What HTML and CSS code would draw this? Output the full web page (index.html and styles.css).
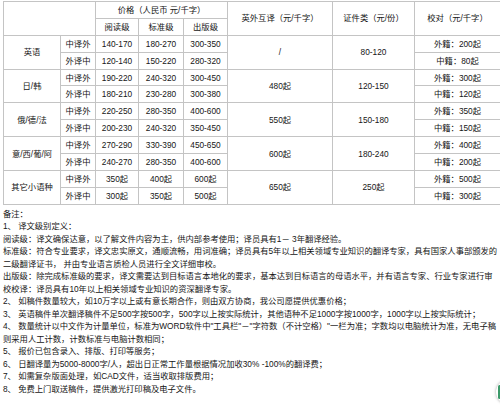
FILE: index.html
```html
<!DOCTYPE html>
<html lang="zh-CN">
<head>
<meta charset="utf-8">
<title>翻译报价</title>
<link rel="stylesheet" href="styles.css">
</head>
<body>
<div class="page">
  <table class="price">
    <colgroup>
      <col class="c1"><col class="c2"><col class="c3"><col class="c4"><col class="c5"><col class="c6"><col class="c7"><col class="c8">
    </colgroup>
    <tr>
      <td colspan="2" rowspan="2"></td>
      <td colspan="3">价格（人民币 元/千字）</td>
      <td rowspan="2">英外互译（元/千字）</td>
      <td rowspan="2">证件类（元/份）</td>
      <td rowspan="2">校对（元/千字）</td>
    </tr>
    <tr><td>阅读级</td><td>标准级</td><td>出版级</td></tr>

    <tr><td rowspan="2">英语</td><td>中译外</td><td>140-170</td><td>180-270</td><td>300-350</td><td rowspan="2">/</td><td rowspan="2">80-120</td><td>外籍：200起</td></tr>
    <tr><td>外译中</td><td>120-140</td><td>150-220</td><td>280-320</td><td>中籍：80起</td></tr>

    <tr><td rowspan="2">日/韩</td><td>中译外</td><td>190-220</td><td>240-320</td><td>300-450</td><td rowspan="2">480起</td><td rowspan="2">120-150</td><td>外籍：300起</td></tr>
    <tr><td>外译中</td><td>180-210</td><td>230-280</td><td>300-380</td><td>中籍：120起</td></tr>

    <tr><td rowspan="2">俄/德/法</td><td>中译外</td><td>220-250</td><td>280-350</td><td>400-600</td><td rowspan="2">550起</td><td rowspan="2">150-180</td><td>外籍：350起</td></tr>
    <tr><td>外译中</td><td>200-230</td><td>240-320</td><td>350-450</td><td>中籍：150起</td></tr>

    <tr><td rowspan="2">意/西/葡/阿</td><td>中译外</td><td>270-290</td><td>330-390</td><td>450-650</td><td rowspan="2">600起</td><td rowspan="2">180-240</td><td>外籍：400起</td></tr>
    <tr><td>外译中</td><td>240-270</td><td>280-350</td><td>400-600</td><td>中籍：200起</td></tr>

    <tr><td rowspan="2">其它小语种</td><td>中译外</td><td>350起</td><td>400起</td><td>600起</td><td rowspan="2">650起</td><td rowspan="2">250起</td><td>外籍：500起</td></tr>
    <tr><td>外译中</td><td>300起</td><td>350起</td><td>500起</td><td>中籍：300起</td></tr>
  </table>

  <div class="notes">
    <div class="line">备注：</div>
    <div class="line">1、 译文级别定义：</div>
    <div class="line">阅读级：译文确保达意，以了解文件内容为主，供内部参考使用；译员具有1－ 3年翻译经验。</div>
    <div class="line">标准级：符合专业要求，译文忠实原文，通顺流畅，用词准确；译员具有5年以上相关领域专业知识的翻译专家，具有国家人事部颁发的</div>
    <div class="line">二级翻译证书， 并由专业语言质检人员进行全文详细审校。</div>
    <div class="line">出版级：除完成标准级的要求，译文需要达到目标语言本地化的要求，基本达到目标语言的母语水平，并有语言专家、行业专家进行审</div>
    <div class="line">校校译：译员具有10年以上相关领域专业知识的资深翻译专家。</div>
    <div class="line">2、 如稿件数量较大，如10万字以上或有意长期合作，则由双方协商，我公司愿提供优惠价格；</div>
    <div class="line">3、 英语稿件单次翻译稿件不足500字按500字，500字以上按实际统计，其他语种不足1000字按1000字，1000字以上按实际统计；</div>
    <div class="line">4、 数量统计以中文作为计量单位，标准为WORD软件中"工具栏"－"字符数（不计空格）"一栏为准；字数均以电脑统计为准，无电子稿</div>
    <div class="line">则采用人工计数，计数标准与电脑计数相同；</div>
    <div class="line">5、 报价已包含录入、排版、打印等服务；</div>
    <div class="line">6、 日翻译量为5000-8000字/人，超出日正常工作量根据情况加收30% -100%的翻译费；</div>
    <div class="line">7、 如需复杂版面处理，如CAD文件，适当收取排版费用；</div>
    <div class="line">8、 免费上门取送稿件，提供激光打印稿及电子文件。</div>
  </div>
  <div class="float-btn"><span class="float-dot"></span></div>
</div>
</body>
</html>
```

FILE: styles.css
```css
html, body {
  margin: 0;
  padding: 0;
  background: #fff;
}
body {
  font-family: "Liberation Sans", "Noto Sans CJK SC", sans-serif;
  font-size: 8.3px;
  color: #151515;
  width: 500px;
  height: 411px;
  overflow: hidden;
}
.page {
  position: relative;
  padding: 1px 1px 0 3px;
}
.price {
  border-collapse: collapse;
  table-layout: fixed;
  width: 497px;
}
.price td {
  border: 1px solid #c4c4c4;
  height: 15.9px;
  padding: 0;
  text-align: center;
  vertical-align: middle;
  line-height: 10px;
  white-space: nowrap;
}
.c1 { width: 57px; }
.c2 { width: 35px; }
.c3 { width: 43px; }
.c4 { width: 45px; }
.c5 { width: 44px; }
.c6 { width: 105px; }
.c7 { width: 82px; }
.c8 { width: 86px; }
.notes {
  margin-top: 3px;
}
.line {
  height: 12.5px;
  line-height: 12.5px;
  white-space: nowrap;
}
.float-btn {
  position: absolute;
  left: 496px;
  top: 380px;
  width: 24px;
  height: 24px;
  border-radius: 50%;
  background: #fff;
  box-shadow: 0 0 3px rgba(0,0,0,0.35);
}
.float-dot {
  position: absolute;
  left: 2px;
  top: 5px;
  width: 3px;
  height: 14px;
  border-radius: 2px;
  background: #3d9a6a;
}
```
